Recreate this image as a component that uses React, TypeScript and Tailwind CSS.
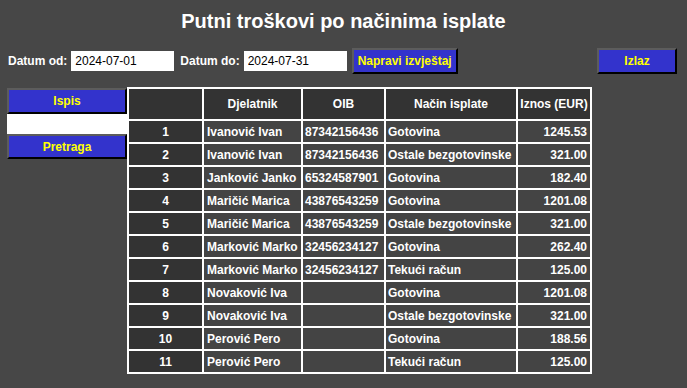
const rows = [
  ["1", "Ivanović Ivan", "87342156436", "Gotovina", "1245.53"],
  ["2", "Ivanović Ivan", "87342156436", "Ostale bezgotovinske", "321.00"],
  ["3", "Janković Janko", "65324587901", "Gotovina", "182.40"],
  ["4", "Maričić Marica", "43876543259", "Gotovina", "1201.08"],
  ["5", "Maričić Marica", "43876543259", "Ostale bezgotovinske", "321.00"],
  ["6", "Marković Marko", "32456234127", "Gotovina", "262.40"],
  ["7", "Marković Marko", "32456234127", "Tekući račun", "125.00"],
  ["8", "Novaković Iva", "", "Gotovina", "1201.08"],
  ["9", "Novaković Iva", "", "Ostale bezgotovinske", "321.00"],
  ["10", "Perović Pero", "", "Gotovina", "188.56"],
  ["11", "Perović Pero", "", "Tekući račun", "125.00"],
];

const btn =
  "border-2 border-t-[#5c5c5c] border-l-[#5c5c5c] border-r-black border-b-black bg-[#3333cc] text-[12px] font-bold text-[#ffff00]";

export default function App() {
  return (
    <div className="min-h-screen bg-[#474747] font-['Liberation_Sans',Arial,sans-serif] text-white">
      <h1 className="pt-[10px] text-center text-[20px] font-bold leading-[23px]">
        Putni troškovi po načinima isplate
      </h1>

      <div className="mt-[15px] flex h-[26px] items-center pl-2 pr-[10px] text-[12px] font-bold">
        <span>Datum od:</span>
        <input
          className="ml-1 h-[20px] w-[103px] bg-white px-1 text-[12px] font-normal text-black outline-none"
          defaultValue="2024-07-01"
        />
        <span className="ml-[6px]">Datum do:</span>
        <input
          className="ml-1 h-[20px] w-[103px] bg-white px-1 text-[12px] font-normal text-black outline-none"
          defaultValue="2024-07-31"
        />
        <button className={`${btn} ml-[5px] h-[26px] px-[4px]`}>Napravi izvještaj</button>
        <button className={`${btn} ml-auto h-[26px] w-[80px]`}>Izlaz</button>
      </div>

      <div className="mt-[13px] flex items-start pl-[7px]">
        <div className="mt-px flex w-[120px] flex-col">
          <button className={`${btn} h-[26px] w-full`}>Ispis</button>
          <input className="h-[20px] w-full bg-white px-1 text-[12px] text-black outline-none" />
          <button className={`${btn} h-[25px] w-full`}>Pretraga</button>
        </div>

        <table className="table-fixed border-collapse whitespace-nowrap border-2 border-white text-[12px] font-bold">
          <thead>
            <tr className="h-[32px]">
              <th className="w-[75px] border-2 border-white bg-[#333333]"></th>
              <th className="w-[99px] border-2 border-white bg-[#333333]">Djelatnik</th>
              <th className="w-[83px] border-2 border-white bg-[#333333]">OIB</th>
              <th className="w-[132px] border-2 border-white bg-[#333333]">Način isplate</th>
              <th className="w-[74px] border-2 border-white bg-[#333333]">Iznos (EUR)</th>
            </tr>
          </thead>
          <tbody>
            {rows.map((r) => (
              <tr key={r[0]} className="h-[23px]">
                <th className="border-2 border-white bg-[#333333] text-center">{r[0]}</th>
                <td className="border-2 border-white bg-[#444444] px-[3px]">{r[1]}</td>
                <td className="border-2 border-white bg-[#444444] px-[2px]">{r[2]}</td>
                <td className="border-2 border-white bg-[#444444] px-[2px]">{r[3]}</td>
                <td className="border-2 border-white bg-[#444444] px-[3px] text-right">{r[4]}</td>
              </tr>
            ))}
          </tbody>
        </table>
      </div>
    </div>
  );
}
